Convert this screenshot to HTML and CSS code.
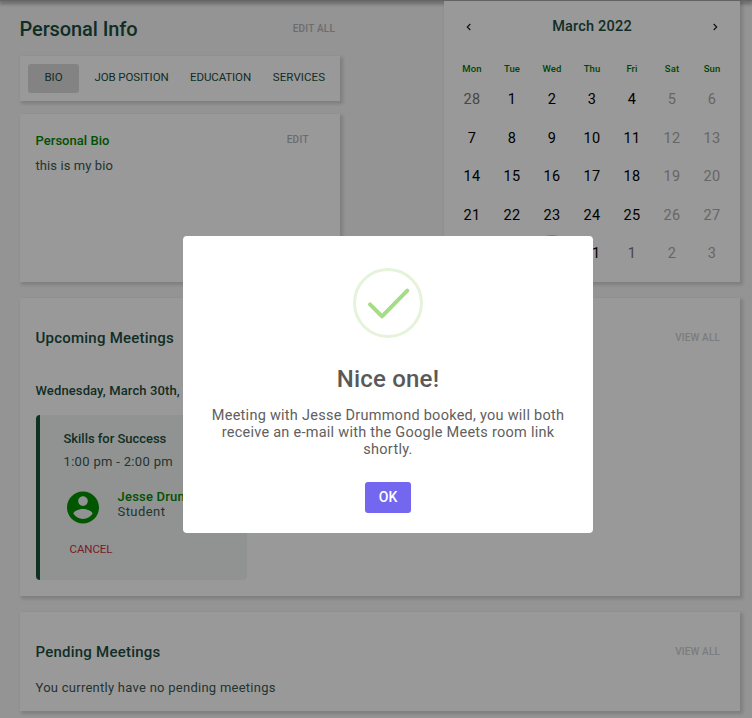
FILE: index.html
```html
<!DOCTYPE html>
<html lang="en">
<head>
<meta charset="utf-8">
<title>Personal Info</title>
<link rel="stylesheet" href="styles.css">
</head>
<body>
<div class="topbar"></div>
<main class="page">
  <div class="columns">
    <section class="profile">
      <header class="profile-head"><h1>Personal Info</h1><a class="action">EDIT ALL</a></header>
      <nav class="tabs card">
        <a class="tab active">BIO</a><a class="tab job">JOB POSITION</a><a class="tab education">EDUCATION</a><a class="tab services">SERVICES</a>
      </nav>
      <article class="bio card">
        <div class="bio-head"><h3>Personal Bio</h3><a class="action">EDIT</a></div>
        <p>this is my bio</p>
      </article>
    </section>
    <section class="calendar card">
      <header class="month">
        <svg viewBox="0 0 8 8"><path d="M5.3 1 2.3 4l3 3"/></svg>
        <h2>March 2022</h2>
        <svg viewBox="0 0 8 8"><path d="M2.7 1l3 3-3 3"/></svg>
      </header>
      <div class="week names"><span>Mon</span><span>Tue</span><span>Wed</span><span>Thu</span><span>Fri</span><span>Sat</span><span>Sun</span></div>
      <div class="week"><span class="outside">28</span><span>1</span><span>2</span><span>3</span><span>4</span><span class="off">5</span><span class="off">6</span></div>
      <div class="week"><span>7</span><span>8</span><span>9</span><span>10</span><span>11</span><span class="off">12</span><span class="off">13</span></div>
      <div class="week"><span>14</span><span>15</span><span>16</span><span>17</span><span>18</span><span class="off">19</span><span class="off">20</span></div>
      <div class="week"><span>21</span><span>22</span><span>23</span><span>24</span><span>25</span><span class="off">26</span><span class="off">27</span></div>
      <div class="week"><span>28</span><span>29</span><span class="selected">30</span><span>31</span><span class="outside">1</span><span class="off">2</span><span class="off">3</span></div>
    </section>
  </div>
  <section class="upcoming card">
    <header class="section-head"><h2>Upcoming Meetings</h2><a class="action faint">VIEW ALL</a></header>
    <h4 class="date">Wednesday, March 30th, 2022</h4>
    <article class="meeting">
      <h4>Skills for Success</h4>
      <p class="time">1:00 pm - 2:00 pm</p>
      <div class="person">
        <svg class="avatar" viewBox="2 2 20 20"><path d="M12 2C6.48 2 2 6.48 2 12s4.48 10 10 10 10-4.48 10-10S17.52 2 12 2zm0 3c1.66 0 3 1.34 3 3s-1.34 3-3 3-3-1.34-3-3 1.34-3 3-3zm0 14.2c-2.5 0-4.71-1.28-6-3.22.03-1.99 4-3.08 6-3.08 1.99 0 5.97 1.09 6 3.08-1.29 1.94-3.5 3.22-6 3.22z"/></svg>
        <div><h5>Jesse Drummond</h5><p class="role">Student</p></div>
      </div>
      <a class="cancel">CANCEL</a>
    </article>
  </section>
  <section class="pending card">
    <header class="section-head"><h2>Pending Meetings</h2><a class="action faint">VIEW ALL</a></header>
    <p>You currently have no pending meetings</p>
  </section>
</main>
<div class="overlay">
  <div class="modal" role="dialog">
    <svg class="success" viewBox="0 0 70 70"><circle cx="35" cy="35" r="33.5"/><path d="M17 36.3 29 48.3 54.3 22.7"/></svg>
    <h2>Nice one!</h2>
    <p>Meeting with Jesse Drummond booked, you will both<br>receive an e-mail with the Google Meets room link<br>shortly.</p>
    <button>OK</button>
  </div>
</div>
</body>
</html>
```
FILE: styles.css
```css
* { box-sizing: border-box; }
html, body { height: 100%; overflow: hidden; }
body { margin: 0; background: #f7f7f7; color: #1b4d3e; font: 400 13px/16px Roboto, "Liberation Sans", sans-serif; }
h1, h2, h3, h4, h5, p { margin: 0; font-weight: 500; }
p { font-weight: 400; color: #3c5750; }

.topbar { height: 1px; background: #a8a8a8; box-shadow: 0 1px 4px 1px rgba(0,0,0,.5); }
.page { display: grid; gap: 16px; padding: 0 12px 0 20px; }
.card { background: #fff; box-shadow: 2px 2px 3px 1px rgba(0,0,0,.14); }
.action { color: #b5b5b5; font-size: 10px; font-weight: 500; letter-spacing: .2px; }
.faint { color: #cfcfcf; letter-spacing: .15px; }

.columns { display: flex; justify-content: space-between; height: 281px; }
.profile { width: 320px; display: flex; flex-direction: column; }
.profile-head { height: 55px; padding: 0 5px 0 0; display: flex; justify-content: space-between; align-items: center; }
h1 { margin-left: -.5px; font-size: 20px; letter-spacing: -.1px; }
.tabs { height: 45px; padding: 8px; display: flex; align-items: flex-start; }
.tab { flex: none; height: 29px; line-height: 27px; font-size: 11.5px; letter-spacing: -.1px; text-align: center; }
.tab.active { width: 51px; background: #dbdbdb; border-radius: 3px; }
.job { margin-left: 15px; width: 75px; }
.education { margin-left: 21px; width: 61px; }
.services { margin-left: 21px; width: 54px; letter-spacing: .08px; }
.bio { flex: 1; margin-top: 13px; padding: 19px 31px 0 15.5px; }
.bio-head { display: flex; justify-content: space-between; }
.bio h3 { font-size: 13px; color: #008800; letter-spacing: .04px; }
.bio-head .action { line-height: 14px; letter-spacing: .35px; }
.bio p { margin-top: 9px; letter-spacing: .09px; }

.calendar { width: 296px; padding: 10px 8px 0; }
.month { height: 32px; padding: 0 13px; display: flex; align-items: center; justify-content: space-between; }
.month h2 { font-size: 14.5px; letter-spacing: .2px; }
.month svg { width: 8px; height: 8px; fill: none; stroke: #222; stroke-width: 1.2; }
.week { display: grid; grid-template-columns: repeat(7, 40px); height: 38.5px; align-items: center; justify-items: center; font-size: 14.5px; letter-spacing: .4px; color: #000; }
.names { height: 20px; margin: 16px 0 2px; font-size: 9.5px; font-weight: 500; letter-spacing: .1px; color: #007500; }
.off { color: #ababab; }
.outside { color: #757575; }
.selected { width: 38px; height: 38px; line-height: 38px; text-align: center; border-radius: 50%; background: #ccc; }

.section-head { display: flex; justify-content: space-between; align-items: center; height: 20px; }
.section-head h2 { font-size: 15px; letter-spacing: .23px; }
.upcoming { height: 298px; padding: 30px 20px 0 15.5px; }
.date { margin-top: 35px; font-size: 13px; line-height: 16px; letter-spacing: .12px; }
.meeting { width: 211px; height: 165px; margin: 16px 0 0 .5px; padding: 16px 0 0 23.5px; border-left: 4px solid #1a5239; border-radius: 4px; background: #f1f5f3; }
.meeting h4 { font-size: 13px; letter-spacing: -.03px; }
.time { margin-top: 7px; letter-spacing: .32px; }
.person { display: flex; margin: 18px 0 0 3.5px; height: 37px; }
.avatar { width: 32px; height: 33px; margin: 3px 18.5px 0 0; fill: #009100; }
.person h5 { font-size: 13px; line-height: 15px; color: #008800; letter-spacing: .22px; margin-top: 1px; }
.role { line-height: 15px; letter-spacing: .45px; }
.cancel { display: block; margin: 16px 0 0 6px; font-size: 11.5px; letter-spacing: -.1px; color: #cf303f; }
.pending { height: 99px; padding: 30px 20px 0 15.5px; }
.pending p { margin-top: 18px; letter-spacing: .26px; }

.overlay { position: fixed; inset: 0; background: rgba(0,0,0,.4); }
.modal { position: absolute; left: 183px; top: 236px; width: 410px; height: 297px; padding-top: 32px; display: flex; flex-direction: column; align-items: center; text-align: center; background: #fff; border-radius: 4px; }
.success { width: 70px; height: 70px; fill: none; }
.success circle { stroke: #e4f3da; stroke-width: 3; }
.success path { stroke: #a5dc86; stroke-width: 4; stroke-linecap: round; stroke-linejoin: round; }
.modal h2 { margin-top: 26px; font-size: 24px; line-height: 30px; letter-spacing: .2px; color: #595959; }
.modal p { margin-top: 13px; font-size: 14.5px; line-height: 17px; letter-spacing: .26px; color: #606060; white-space: nowrap; }
.modal button { width: 46px; height: 31px; margin-top: 24px; padding: 0; border: 0; border-radius: 3px; background: #7367f0; color: #fff; font: 500 14px/31px Roboto, sans-serif; }
```
